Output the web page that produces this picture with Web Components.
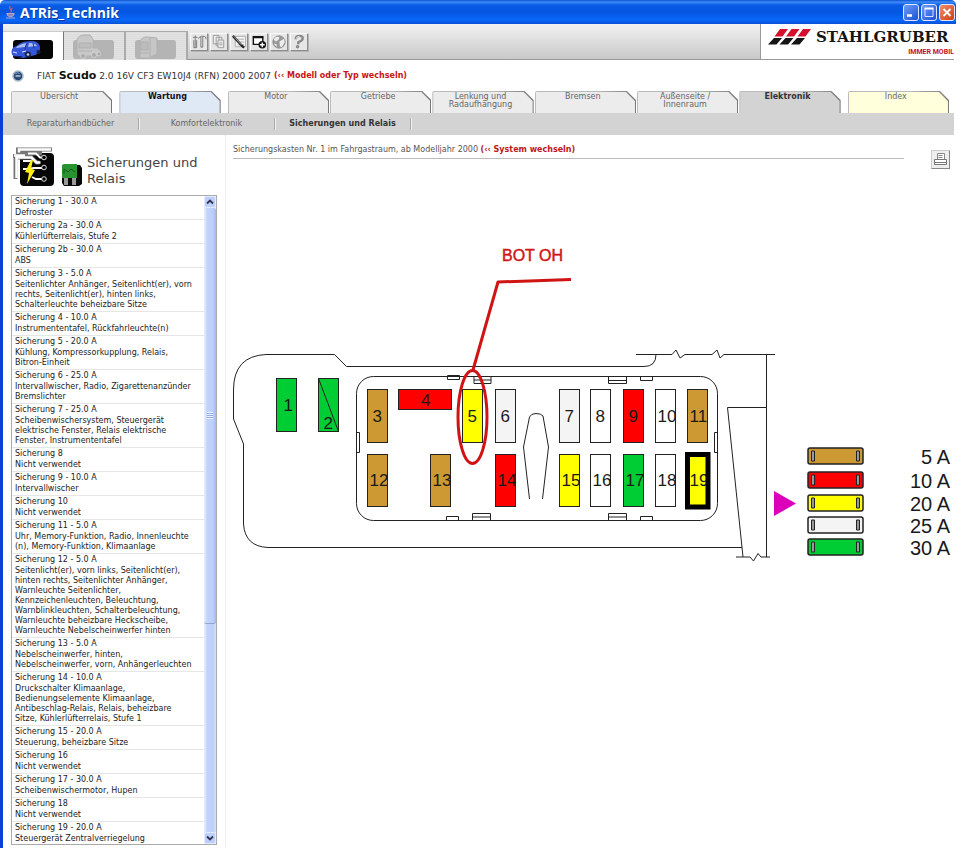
<!DOCTYPE html>
<html lang="de">
<head>
<meta charset="utf-8">
<title>ATRis_Technik</title>
<style>
  html { background: #fff; }
  body { margin: 0; font-family: "DejaVu Sans", Verdana, sans-serif; font-size: 8px; color: #444; }
</style>
</head>
<body>
<app-window>
  <title-bar slot="title">ATRis_Technik</title-bar>
  <tool-strip slot="tools"></tool-strip>
  <brand-logo slot="brand"></brand-logo>
  <vehicle-line slot="vehicle"></vehicle-line>
  <nav-tabs slot="tabs">
    <nav-tab spaced>Übersicht</nav-tab>
    <nav-tab spaced kind="service">Wartung</nav-tab>
    <nav-tab>Motor</nav-tab>
    <nav-tab>Getriebe</nav-tab>
    <nav-tab>Lenkung und<br>Radaufhängung</nav-tab>
    <nav-tab>Bremsen</nav-tab>
    <nav-tab>Außenseite /<br>Innenraum</nav-tab>
    <nav-tab spaced kind="current">Elektronik</nav-tab>
    <nav-tab kind="index">Index</nav-tab>
  </nav-tabs>
  <sub-nav slot="sub"></sub-nav>
  <fuse-panel slot="side"></fuse-panel>
  <diagram-view slot="main"></diagram-view>
</app-window>

<script>
const define = (name, html, setup) => {
  const template = document.createElement('template');
  template.innerHTML = html;
  customElements.define(name, class extends HTMLElement {
    constructor() {
      super();
      this.attachShadow({ mode: 'open' }).append(template.content.cloneNode(true));
    }
    connectedCallback() { if (setup) setup(this, this.shadowRoot); }
  });
};

define('app-window', `
<style>
  :host { display: flex; flex-direction: column; box-sizing: border-box; min-height: 848px; margin-right: 4px; }
  .frame { flex: 1; display: flex; flex-direction: column; border-left: 3px solid #0a3fd8; padding-right: 2px; }
  header { display: flex; box-sizing: border-box; height: 36px; background: linear-gradient(#f1f1f1, #c9c9c9); border-bottom: 1px solid #999; }
  ::slotted([slot=tools]) { flex: 1; }
  main { flex: 1; display: grid; grid-template-columns: 223px 1fr; }
</style>
<slot name="title"></slot>
<div class="frame">
  <header><slot name="tools"></slot><slot name="brand"></slot></header>
  <slot name="vehicle"></slot><slot name="tabs"></slot><slot name="sub"></slot>
  <main><slot name="side"></slot><slot name="main"></slot></main>
</div>`);

define('title-bar', `
<style>
  :host { display: flex; align-items: center; height: 24px; padding: 0 1px 0 5px; box-sizing: border-box;
    border-radius: 5px 5px 0 0;
    background: linear-gradient(#0a4fd0 0, #3f8cf8 2px, #0a5ce6 5px, #0555e0 12px, #0868fa 20px, #0a50d8 24px); }
  h1 { flex: 1; margin: 0 0 0 4px; font: bold 14px "Open Sans", sans-serif; color: #fff; text-shadow: 1px 1px 0 #0a3a9a; }
  .buttons { display: flex; gap: 2px; }
  button { width: 16px; height: 17px; padding: 0; border: 1px solid #dfe8ff; border-radius: 3px;
    background: linear-gradient(135deg, #6f9cf5, #1c50d8); }
  button.close { background: linear-gradient(135deg, #f0906c, #d13c14); }
  svg { display: block; width: 14px; height: 15px; }
</style>
<svg viewBox="0 0 11 14" style="width:11px;height:14px" fill="none" stroke-width="1.2"><path d="M5.500 1q-2 2 0 3.500t0 3" stroke="#e0506a"/><path d="M7.500 3q-2 1.500-.5 3" stroke="#e0506a"/><path d="M2 8.500h7q-.5 3-3.500 3T2 8.500zM1 13h9" fill="#8e7fb5" stroke="#b9a3c8"/></svg>
<h1><slot></slot></h1>
<div class="buttons">
  <button aria-label="Minimieren"><svg viewBox="0 0 14 15"><path d="M3 10.500h5" stroke="#fff" stroke-width="2.500"/></svg></button>
  <button aria-label="Maximieren"><svg viewBox="0 0 14 15"><path d="M3 3.500h8v8H3z" fill="none" stroke="#d8e4ff"/><path d="M2.500 3.500h9" stroke="#fff" stroke-width="2"/></svg></button>
  <button class="close" aria-label="Schließen"><svg viewBox="0 0 14 15"><path d="M3.500 4l7 7m0-7l-7 7" stroke="#fff" stroke-width="1.800"/></svg></button>
</div>`);

define('tool-strip', `
<style>
  :host { display: flex; align-items: flex-start; padding-top: 7px; box-sizing: border-box; min-width: 0; }
  .mode { width: 62px; height: 29px; padding: 0; border: 0; border-top: 1px solid #aaa; border-right: 2px solid #aaa;
    background: repeating-linear-gradient(#dcdcdc 0 1px, #e3e3e3 1px 2px); }
  .mode.on { background: #fff; width: 61px; border-right: 1px solid #777; border-top-color: #ccc; }
  .mode svg { display: block; width: 100%; height: 28px; }
  .tools { display: flex; gap: 1px; padding: 2px 0 0 2px; }
  .tools button { width: 18px; height: 18px; padding: 0; background: #e6e6e6; border: 1px solid; border-color: #fafafa #8c8c8c #8c8c8c #fafafa; box-shadow: 1px 1px #b4b4b4; }
  .tools { gap: 2px; }
  .tools svg { display: block; width: 16px; height: 16px; fill: none; stroke: #777; }
</style>
<button class="mode on" aria-label="PKW"><svg viewBox="0 0 60 28">
  <rect x="10" y="8" width="40" height="19" rx="3" fill="#050505"/>
  <path d="M8.500 20q0-5 5-6 5-4.500 10-4.500 7-1 10 .5 3 1.500 3.500 5 .5 4-1.500 6l-3 2-12 3-9-1.500q-3-1-3-4.500z" fill="#3457d8"/>
  <path d="M14 14.500q5-3.500 10-3.500l-2 4-9 1zM26 11q6-.5 8 3l-9 1z" fill="#a9bbf0"/>
  <path d="M24 11l-2 5v7M30 11l1 5" stroke="#1d349b" fill="none"/>
  <path d="M10 20l4 1m5-1l4-1" stroke="#dfe8ff"/>
  <circle cx="25" cy="22.500" r="3" fill="#16204e"/><circle cx="25" cy="22.500" r="1.300" fill="#c3cbe0"/>
  <circle cx="35.500" cy="20" r="2" fill="#16204e"/><path d="M11 24.500h8" stroke="#101c60"/>
</svg></button>
<button class="mode" aria-label="LKW"><svg viewBox="0 0 60 28">
  <rect x="9" y="8" width="41" height="19" rx="3" fill="#b4b4b4"/>
  <path d="M13 23V8q1-5 8-5h5l3 4v9h5l3 4v4H14z" fill="#c8c8c8" stroke="#b0b0b0"/>
  <path d="M15 11h12v5H15zM14 19h14" stroke="#b0b0b0" fill="#bdbdbd"/>
  <g fill="#aaa" stroke="#d0d0d0"><circle cx="19" cy="24" r="2.500"/><circle cx="30" cy="23" r="2.500"/><circle cx="35" cy="22" r="2"/></g>
</svg></button>
<button class="mode" aria-label="Transporter"><svg viewBox="0 0 60 28">
  <rect x="9" y="8" width="41" height="19" rx="3" fill="#b4b4b4"/>
  <path d="M14 10q1-5 7-5l10 1v16l-8 4H14z" fill="#c6c6c6" stroke="#b0b0b0"/>
  <path d="M15 10h7v8h-7zM24 6v19M14 21h9" stroke="#b0b0b0" fill="#bcbcbc"/>
</svg></button>
<div class="tools">
  <button aria-label="Werkzeuge"><svg viewBox="0 0 17 17"><path d="M2 3.500h5M4.500 1.500v13M3 6.500v8h3v-8M8 5q1-2.500 3-2.500h3q2 0 2 3M10.500 3v11h2V3"/></svg></button>
  <button aria-label="Kopieren"><svg viewBox="0 0 17 17" style="stroke:#999"><path d="M2.500 1.500h6v9h-6zM5.500 3.500h6v9h-6z" fill="#eee"/><path d="M8.500 6.500h5v8h-6v-8zM9 9.500h3M9 11.500h3" fill="#eee"/></svg></button>
  <button aria-label="Notiz"><svg viewBox="0 0 17 17"><path d="M4.500 2.500h11v11h-11zM7 5.500h7M8 8.500h6M7 11.500h7" stroke="#aaa" fill="#f4f4f4"/><path d="M2 2l10 11 2 1.500" stroke="#222" stroke-width="2.500"/><path d="M3 2.500l8 9" stroke="#ccc" stroke-width=".8"/></svg></button>
  <button aria-label="Hinzufügen"><svg viewBox="0 0 17 17"><path d="M2.500 3h10v8h-10z" stroke="#111" fill="#fff" stroke-width="1.500"/><path d="M2 3.500h11" stroke="#111" stroke-width="2"/><circle cx="12" cy="11.500" r="4" fill="#111" stroke="none"/><path d="M12 9v5m-2.500-2.500h5" stroke="#fff" stroke-width="1.500"/></svg></button>
  <button aria-label="Internet"><svg viewBox="0 0 17 17"><circle cx="8.500" cy="8.500" r="6.500" fill="#999" stroke="#888"/><path d="M4 4q3-2 5-.5L8 6 5 8 3 6zM9 8l5-3 .5 4-3 5-2-1zM3 10l3 1v3z" fill="#eee" stroke="none"/></svg></button>
  <button aria-label="Hilfe"><svg viewBox="0 0 17 17"><path d="M5 5.500q0-3.500 4-3.500 3.500 0 3.500 2.500T8 8.500L7.500 11" stroke-width="2.500" stroke="#888"/><path d="M5.500 5q.5-2.500 3.500-2.500" stroke="#fff" stroke-width=".8"/><circle cx="7" cy="13.500" r="1.300" fill="#999"/></svg></button>
</div>`);

define('brand-logo', `
<style>
  :host { display: block; box-sizing: border-box; width: 194px; height: 35px; background: #fff; border-left: 1px solid #999; padding: 5px 0 0 7px; }
  .row { display: flex; align-items: flex-start; gap: 5px; white-space: nowrap; }
  svg { flex: none; width: 43px; height: 16px; }
  b { font: bold 15px/17px "DejaVu Serif", serif; color: #151515; }
  p { margin: 0; font: bold 7px/12px Roboto, sans-serif; color: #c8102e; text-align: right; }
</style>
<div class="row"><svg viewBox="0 0 43 16">
  <path d="M12 0h8l-5.500 7.500h-8zM23.500 0h8L26 7.500h-8zM35 0h8l-5.500 7.500h-8z" fill="#d4102c"/>
  <path d="M6 9h8l-5.500 6.500H0zM17.500 9h8L20 15.500h-8.500zM29 9h8l-5.500 6.500H23z" fill="#151515"/>
</svg><b>STAHLGRUBER</b></div><p>IMMER MOBIL</p>`);

define('vehicle-line', `
<style>
  :host { display: flex; align-items: center; height: 31px; padding-left: 9px; color: #333; white-space: nowrap; }
  svg { width: 12px; height: 12px; margin-right: 13px; }
  span { font-size: 9px; } b { font-size: 11px; color: #111; }
  a { margin-left: 3px; font-size: 8px; font-weight: bold; color: #c81414; text-decoration: none; }
</style>
<svg viewBox="0 0 12 12"><circle cx="6" cy="6" r="5" fill="#2a4a78" stroke="#a9b8cc" stroke-width="1.500"/><path d="M3.500 6h5" stroke="#b9c8e0" stroke-width="1.500"/><path d="M3.500 3.500q2.500-1.500 4 0" stroke="#8aa5cc" fill="none"/></svg>
<span>FIAT <b>Scudo</b> 2.0 16V CF3 EW10J4 (RFN) 2000 2007</span>
<a href="#">(‹‹ Modell oder Typ wechseln)</a>`);

define('nav-tabs', `
<style>:host { display: flex; gap: 1px; padding: 0 5px 0 8px; height: 22px; }</style>
<nav style="display:contents"><slot></slot></nav>`);

define('nav-tab', `
<style>
  :host { flex: 1 1 0; display: block; --fill: #ececec; --ink: #666; min-width: 0; }
  :host([spaced]) { margin-right: 6px; }
  :host([kind=service]) { --fill: #dfe9f6; --ink: #112; font-weight: bold; }
  :host([kind=current]) { --fill: #d3d3d3; --ink: #333; font-weight: bold; }
  :host([kind=index]) { --fill: #ffffdc; }
  a { display: block; height: 22px; padding: 1px; box-sizing: border-box; text-decoration: none; color: var(--ink);
    background: linear-gradient(90deg, #bbb 60%, #777); border-radius: 2px 0 0 0;
    clip-path: polygon(0 0, calc(100% - 9px) 0, 100% 9px, 100% 100%, 0 100%); }
  span { display: block; height: 21px; padding: 1px 5px 0 0; box-sizing: border-box; font-size: 8px; line-height: 8px; text-align: center; white-space: nowrap;
    background: var(--fill); clip-path: polygon(0 0, calc(100% - 9px) 0, 100% 9px, 100% 100%, 0 100%); }
</style>
<a href="#"><span><slot></slot></span></a>`);

define('sub-nav', `
<style>
  :host { display: flex; align-items: center; height: 22px; background: #d3d3d3; }
  a { width: 136px; box-sizing: border-box; line-height: 12px; text-align: center; border-right: 1px solid #aaa; box-shadow: 1px 0 #f0f0f0; color: #666; text-decoration: none; white-space: nowrap; }
  .on { font-weight: bold; color: #333; }
</style>
<a href="#">Reparaturhandbücher</a><a href="#">Komfortelektronik</a><a href="#" class="on">Sicherungen und Relais</a>`);

const entries = [
  ['1 - 30.0 A', 'Defroster'],
  ['2a - 30.0 A', 'Kühlerlüfterrelais, Stufe 2'],
  ['2b - 30.0 A', 'ABS'],
  ['3 - 5.0 A', 'Seitenlichter Anhänger, Seitenlicht(er), vorn\nrechts, Seitenlicht(er), hinten links,\nSchalterleuchte beheizbare Sitze'],
  ['4 - 10.0 A', 'Instrumententafel, Rückfahrleuchte(n)'],
  ['5 - 20.0 A', 'Kühlung, Kompressorkupplung, Relais,\nBitron-Einheit'],
  ['6 - 25.0 A', 'Intervallwischer, Radio, Zigarettenanzünder\nBremslichter'],
  ['7 - 25.0 A', 'Scheibenwischersystem, Steuergerät\nelektrische Fenster, Relais elektrische\nFenster, Instrumententafel'],
  ['8', 'Nicht verwendet'],
  ['9 - 10.0 A', 'Intervallwischer'],
  ['10', 'Nicht verwendet'],
  ['11 - 5.0 A', 'Uhr, Memory-Funktion, Radio, Innenleuchte\n(n), Memory-Funktion, Klimaanlage'],
  ['12 - 5.0 A', 'Seitenlicht(er), vorn links, Seitenlicht(er),\nhinten rechts, Seitenlichter Anhänger,\nWarnleuchte Seitenlichter,\nKennzeichenleuchten, Beleuchtung,\nWarnblinkleuchten, Schalterbeleuchtung,\nWarnleuchte beheizbare Heckscheibe,\nWarnleuchte Nebelscheinwerfer hinten'],
  ['13 - 5.0 A', 'Nebelscheinwerfer, hinten,\nNebelscheinwerfer, vorn, Anhängerleuchten'],
  ['14 - 10.0 A', 'Druckschalter Klimaanlage,\nBedienungselemente Klimaanlage,\nAntibeschlag-Relais, Relais, beheizbare\nSitze, Kühlerlüfterrelais, Stufe 1'],
  ['15 - 20.0 A', 'Steuerung, beheizbare Sitze'],
  ['16', 'Nicht verwendet'],
  ['17 - 30.0 A', 'Scheibenwischermotor, Hupen'],
  ['18', 'Nicht verwendet'],
  ['19 - 20.0 A', 'Steuergerät Zentralverriegelung'],
];

define('fuse-entry', `
<style>
  :host { display: block; padding: 0 0 1px 3px; border-bottom: 1px solid #e6e6e6; color: #222; }
  h3 { margin: 0; font-size: 8px; font-weight: normal; line-height: 12px; }
  p { margin: 0; font-size: 8px; line-height: 10px; white-space: pre-line; }
</style>
<h3><slot name="name"></slot></h3><p><slot></slot></p>`);

define('fuse-panel', `
<style>
  :host { display: flex; flex-direction: column; padding: 12px 8px 2px 8px; border-right: 1px solid #eee; }
  .head { display: flex; align-items: flex-end; height: 40px; margin-bottom: 8px; padding-left: 2px; }
  h2 { margin: 0 0 0 4px; font-size: 13px; line-height: 16px; font-weight: normal; color: #444; white-space: nowrap; }
  .box { display: flex; border: 1px solid #aaa; }
  .list { flex: 1; min-width: 0; }
  .list fuse-entry:last-child { border-bottom: 0; padding-bottom: 0; }
  .bar { width: 12px; display: flex; flex-direction: column;
    background: #eef0f6; }
  .bar button { height: 12px; padding: 0; border: 1px solid #e4ebff; border-radius: 2px; background: #bdd0fb; }
  .bar svg { display: block; margin: auto; width: 8px; height: 8px; }
  .thumb { flex: 2; display: flex; flex-direction: column; justify-content: center; border-bottom: 1px solid #8fa6d8; border-radius: 2px; background: linear-gradient(90deg, #eef2ff 0, #c3d3fd 3px, #bccffb 9px, #a3b9ec 12px); }
  .track { flex: 1; background: linear-gradient(90deg, #eef2ff 0, #c3d3fd 3px, #bccffb 9px, #d4dffa 12px); }
  .grip { height: 7px; margin: 0 3px; background: repeating-linear-gradient(#eef3ff 0 1px, #91abe8 1px 2px); }
</style>
<div class="head">
  <svg viewBox="0 0 41 40" width="41" height="40">
    <rect x="7" y="6" width="34" height="33" rx="4" fill="#060606"/>
    <path d="M39 2.500H5v4h24M2.500 32V10.500h16l5 5h3M0 9h13" fill="none" stroke="#777" stroke-width="4"/>
    <path d="M38 2.500H6v3M3.500 31V10.500h15l5 5h4M1 8.500h11" fill="none" stroke="#fff" stroke-width="2.500"/>
    <path d="M15 6.500h8l4 4h3M10 22h5l6-1h8M19 30l4 2h6M19 14l-9 0" fill="none" stroke="#fff" stroke-width="1.800"/>
    <g fill="#060606" stroke="#ddd"><circle cx="31" cy="10.500" r="2.300"/><circle cx="31" cy="20.500" r="2.300"/><circle cx="31" cy="32" r="2.300"/></g>
    <path d="M18 13l-6 12 4 1-2 11 8-14-4-1 2-9z" fill="#ffee10"/>
  </svg>
  <svg viewBox="0 0 22 24" width="22" height="24" style="margin-left:7px">
    <path d="M5 2h14l2 3v16l-3 2H3l-2-3V6z" fill="#080808"/><path d="M1 2l2-1h13v14H1z" fill="#299332"/>
    <path d="M3 11V6l4 3 3-3 4 3" fill="none" stroke="#125b1a"/><path d="M3 15h4v7H3zM11 15h4v7h-4z" fill="#999"/>
  </svg>
  <h2>Sicherungen und<br>Relais</h2>
</div>
<div class="box">
  <div class="list"></div>
  <div class="bar">
    <button aria-label="Nach oben"><svg viewBox="0 0 8 8"><path d="M1 5.500l3-3 3 3" fill="none" stroke="#335" stroke-width="1.800"/></svg></button>
    <div class="thumb"><div class="grip"></div></div>
    <div class="track"></div>
    <button aria-label="Nach unten"><svg viewBox="0 0 8 8"><path d="M1 2.500l3 3 3-3" fill="none" stroke="#335" stroke-width="1.800"/></svg></button>
  </div>
</div>`, (host, root) => {
  const list = root.querySelector('.list');
  if (list.childElementCount) return;
  for (const [name, text] of entries) {
    const entry = document.createElement('fuse-entry');
    const title = document.createElement('span');
    title.slot = 'name';
    title.textContent = 'Sicherung ' + name;
    entry.append(title, text);
    list.append(entry);
  }
});

define('diagram-view', `
<style>
  :host { display: block; min-width: 0; }
  .top { display: flex; align-items: flex-start; justify-content: space-between; padding: 9px 4px 0 7px; height: 28px; }
  .crumb { flex: 1; margin-right: 27px; height: 14px; line-height: 12px; border-bottom: 1px solid #bbb; color: #555; white-space: nowrap; }
  a { color: #c01818; font-weight: bold; text-decoration: none; }
  button { width: 19px; height: 19px; margin-top: 6px; padding: 0; background: #eee; border: 1px solid; border-color: #ccc #888 #888 #ccc; }
  button svg { display: block; }
</style>
<div class="top">
  <div class="crumb">Sicherungskasten Nr. 1 im Fahrgastraum, ab Modelljahr 2000 <a href="#">(‹‹ System wechseln)</a></div>
  <button aria-label="Drucken"><svg viewBox="0 0 17 17" width="17" height="17" fill="#fff" stroke="#888"><path d="M5.500 2.500h7v6h-7zM6.500 4.500h4M6.500 6.500h4"/><path d="M2.500 8.500h12v5h-12zM3 11.500h11" stroke="#777"/></svg></button>
</div>
<fuse-diagram></fuse-diagram>`);

const colours = { brown: '#cc9933', red: '#ff0000', yellow: '#ffff00', white: '#ffffff', grey: '#f4f4f4', green: '#00cc33' };
const upper = 389.5, lower = 454.5;
const fuses = [
  ['1', 276.5, 378.5, 'green'], ['2', 318.5, 378.5, 'green'],
  ['3', 367.5, upper, 'brown'], ['5', 462.5, upper, 'yellow'], ['6', 495.5, upper, 'grey'],
  ['7', 559.5, upper, 'grey'], ['8', 590.5, upper, 'white'], ['9', 623.5, upper, 'red'],
  ['10', 655.5, upper, 'white'], ['11', 687.5, upper, 'brown'],
  ['12', 367.5, lower, 'brown'], ['13', 430.5, lower, 'brown'], ['14', 495.5, lower, 'red'],
  ['15', 559.5, lower, 'yellow'], ['16', 590.5, lower, 'white'], ['17', 623.5, lower, 'green'],
  ['18', 655.5, lower, 'white'], ['19', 687.5, lower, 'yellow'],
];
const legend = [['5 A', 448, 'brown'], ['10 A', 472, 'red'], ['20 A', 495, 'yellow'], ['25 A', 517, 'grey'], ['30 A', 539, 'green']];

const fuseMarkup = fuses.map(([n, x, y, c]) => {
  const height = y === lower ? 52 : 53;
  const baseline = n === '2' ? 429 : n === '1' ? 411 : y === lower ? 486 : 422;
  const label = `<text x="${x + (n.length > 1 ? 2 : n === '1' ? 7 : 5)}" y="${baseline}">${n}</text>`;
  return `<rect x="${x}" y="${y}" width="20" height="${height}" fill="${colours[c]}"/>${label}`;
}).join('');
const legendMarkup = legend.map(([t, y, c]) => `
  <rect x="808" y="${y}" width="55" height="16" rx="2" fill="${colours[c]}" stroke-width="1.500"/>
  <path d="M811.500 ${y + 3}h3v10h-3zM856.500 ${y + 3}h3v10h-3z" fill="#999"/>
  <text class="amp" x="950" y="${y + 16}">${t}</text>`).join('');

define('fuse-diagram', `
<style>
  :host { display: block; }
  svg { display: block; width: 100%; height: auto; }
  text { font: 17px "Liberation Sans", Arial, sans-serif; fill: #1a1a1a; stroke: none; }
  .amp { font-size: 20px; text-anchor: end; }
  .note { font-size: 16px; fill: #d01818; stroke: #d01818; stroke-width: .5; }
</style>
<svg viewBox="226 172 728 670" fill="none" stroke="#222" stroke-width="1" role="img" aria-label="Sicherungskasten">
  <path d="M656 354.500Q656 366.500 644 366.500H346.500L334.500 354.500H266Q233.500 356 233.500 390V419L243.500 444V524Q245 546.500 268 547.500H742"/>
  <path d="M636 354.500H672L676 350 680 358 685 354.500H712L717 350 720 358 724 354.500H775M766.500 354V557M766 407.500H727.500L743 557M736 557H750L753.500 561 758 553.500 761 557H770"/>
  <rect x="356.500" y="376.500" width="361" height="144" rx="17"/>
  <path d="M447.500 375.500h12v4h-12zM474 376.500h17v7h-17zM474 380h17M608.500 376.500h18v7h-18zM608.500 380.500h18M640.500 376.500h12v4h-12z"/>
  <path d="M446.500 516.500h12v4h-12zM472.500 513.500h18v7h-18zM472.500 517h18M608.500 513.500h18v7h-18zM608.500 517h18M640.500 516.500h12v4h-12zM356.500 432.500h3v20h-3zM714.500 432.500h3v20h-3z"/>
  <path d="M529.500 499L523.500 447 529.500 417Q531 413.500 536 413.500T543 416L548.500 447 542.500 499"/>
  ${fuseMarkup}
  <rect x="398.500" y="389.500" width="53" height="20" fill="#ff0000"/><text x="421" y="406">4</text>
  <path d="M318.500 378.500L338.500 431.500"/>
  <rect x="687.500" y="454.500" width="20.500" height="52.500" stroke="#000" stroke-width="5"/>
  ${legendMarkup}
  <path d="M774 491L796 503.500 774 516z" fill="#dd00bb" stroke="none"/>
  <g stroke="#d01414" stroke-width="3"><ellipse cx="472.500" cy="417" rx="14.500" ry="46.500"/><path d="M473 370L498 282 571 279.500" stroke-linejoin="round"/></g>
  <text class="note" x="502" y="261">BOT OH</text>
</svg>`);
</script>
</body>
</html>
